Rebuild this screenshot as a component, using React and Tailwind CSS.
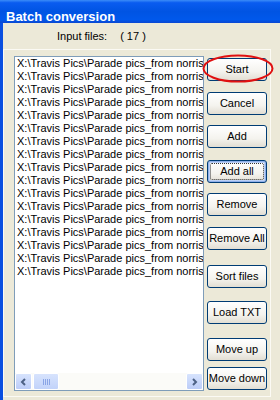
import React from 'react';

const rows = Array.from({ length: 17 }, () => 'X:\\Travis Pics\\Parade pics_from norris');

const buttons = [
  { label: 'Start', mt: 'mt-0' },
  { label: 'Cancel', mt: 'mt-[11px]' },
  { label: 'Add', mt: 'mt-[10px]' },
  { label: 'Add all', mt: 'mt-[12px]', focus: true },
  { label: 'Remove', mt: 'mt-[10px]' },
  { label: 'Remove All', mt: 'mt-[11px]' },
  { label: 'Sort files', mt: 'mt-[15px]' },
  { label: 'Load TXT', mt: 'mt-[13px]' },
  { label: 'Move up', mt: 'mt-[14px]' },
  { label: 'Move down', mt: 'mt-[6px]' },
];

const XpButton = ({ label, mt, focus }) => (
  <button
    className={`${mt} relative h-[23px] w-[60px] rounded-[3px] border border-[#003c74] bg-[linear-gradient(#ffffff,#f4f3ee_60%,#e2ded3)] text-[11px] leading-none text-black whitespace-nowrap ${
      focus ? 'shadow-[inset_0_0_0_1px_#8fb0ea,inset_0_0_0_2px_#bcd1f6]' : ''
    }`}
  >
    {focus && <span className="absolute inset-[2px] rounded-[2px] border border-dotted border-[#333]" />}
    {label}
  </button>
);

const Chevron = ({ dir }) => (
  <svg width="7" height="8" viewBox="0 0 7 8">
    <path
      d={dir === 'left' ? 'M5 1 L2 4 L5 7' : 'M2 1 L5 4 L2 7'}
      fill="none"
      stroke="#4d6185"
      strokeWidth="2"
    />
  </svg>
);

const ScrollBtn = ({ dir }) => (
  <div className="h-[17px] w-[17px] rounded-[2px] border border-white bg-[linear-gradient(#d7e3fd,#bccdf8)] flex items-center justify-center">
    <Chevron dir={dir} />
  </div>
);

export default function App() {
  return (
    <div className="relative h-[400px] w-[280px] overflow-hidden bg-[#ece9d8] font-['Liberation_Sans',Arial,sans-serif]">
      {/* Title bar */}
      <div className="h-[23px] bg-[linear-gradient(#3b8cf8_0%,#0a5cf0_12%,#0054e3_50%,#0058eb_85%,#0a47d2_100%)] pl-[6px] pt-[4px]">
        <span className="text-[13px] font-bold leading-[16px] text-white">Batch conversion</span>
      </div>

      {/* Body */}
      <div className="flex h-[377px] flex-col border-l-[3px] border-[#0a4fe0]">
        <div className="flex h-[26px] items-center pl-[54px] pt-[1px] text-[11px] text-black">
          <span>Input files:</span>
          <span className="ml-[13px]">( 17 )</span>
        </div>

        <div className="flex h-[348px] w-[268px] border border-[#fbfaf4]">
          {/* File list */}
          <div className="ml-[10px] mt-[6px] flex h-[335px] w-[190px] flex-col border border-[#7f9db9] bg-white">
            <div className="flex-1 overflow-hidden pl-[2px]">
              {rows.map((r, i) => (
                <div key={i} className="h-[13px] whitespace-nowrap text-[11px] leading-[13px] text-black">
                  {r}
                </div>
              ))}
            </div>
            <div className="flex h-[17px] items-center bg-[#fbfbf8]">
              <ScrollBtn dir="left" />
              <div className="ml-[1px] flex h-[17px] w-[26px] items-center justify-center gap-[1px] rounded-[2px] border border-white bg-[linear-gradient(#d7e3fd,#c2d3fa)]">
                <span className="h-[6px] w-[1px] bg-[#8aa5e6]" />
                <span className="h-[6px] w-[1px] bg-[#8aa5e6]" />
                <span className="h-[6px] w-[1px] bg-[#8aa5e6]" />
                <span className="h-[6px] w-[1px] bg-[#8aa5e6]" />
              </div>
              <div className="flex-1" />
              <ScrollBtn dir="right" />
            </div>
          </div>

          {/* Buttons */}
          <div className="ml-[3px] mt-[8px] flex flex-col">
            {buttons.map((b) => (
              <XpButton key={b.label} {...b} />
            ))}
          </div>
        </div>
      </div>

      {/* Red annotation ellipse */}
      <svg className="absolute left-[202px] top-[54px]" width="72" height="29" viewBox="0 0 72 29">
        <ellipse cx="36" cy="14.5" rx="34.5" ry="13" fill="none" stroke="#e01010" strokeWidth="2" />
      </svg>
    </div>
  );
}
